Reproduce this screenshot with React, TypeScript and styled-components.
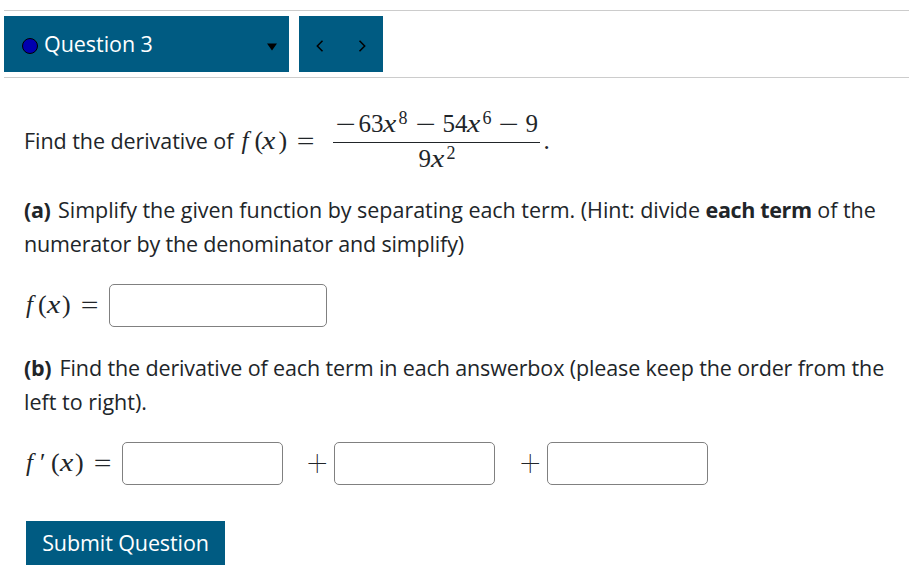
import React from 'react';
import styled, { createGlobalStyle } from 'styled-components';

const App = () => {
  return (
    <Page>
      <GlobalStyle />
      <Header>
        <QuestionSelect>
          <Status />
          <Title>Question 3</Title>
          <Caret viewBox="0 0 10 8">
            <path d="M0 0.5h10L5 7.5z" />
          </Caret>
        </QuestionSelect>
        <Pager>
          <Arrow viewBox="0 0 8 12">
            <path d="M6.5 0.7L1.3 6l5.2 5.3" />
          </Arrow>
          <Arrow viewBox="0 0 8 12">
            <path d="M1.5 0.7L6.7 6l-5.2 5.3" />
          </Arrow>
        </Pager>
      </Header>

      <Body>
        <Prompt>
          <Line $spacing={-0.06}>Find the derivative of</Line>
          <Math>
            <Func $w={15}>f</Func>
            <Paren $w={8}>(</Paren>
            <Variable $w={16}>x</Variable>
            <Paren $w={19}>)</Paren>
            <Operator $w={18}>=</Operator>
          </Math>
          <Fraction>
            <Numerator>
              <Operator $w={21}>−</Operator>
              <Num $w={25}>63</Num>
              <Variable $w={15}>x</Variable>
              <Power $w={19}>8</Power>
              <Operator $w={25}>−</Operator>
              <Num $w={25}>54</Num>
              <Variable $w={15}>x</Variable>
              <Power $w={18}>6</Power>
              <Operator $w={25}>−</Operator>
              <Num $w={12}>9</Num>
            </Numerator>
            <Denominator>
              <Num $w={13}>9</Num>
              <Variable $w={15}>x</Variable>
              <Power $w={9}>2</Power>
            </Denominator>
          </Fraction>
          <Period>.</Period>
        </Prompt>

        <Part $top={16}>
          <Line $spacing={-0.035}>
            <Label $gap={3}>(a)</Label> Simplify the given function by separating each term. (Hint: divide <b>each term</b> of the
          </Line>
          <Line $spacing={-0.16}>numerator by the denominator and simplify)</Line>
        </Part>

        <AnswerRow>
          <Math>
            <Func $w={14}>f</Func>
            <Paren $w={9}>(</Paren>
            <Variable $w={15}>x</Variable>
            <Paren $w={19}>)</Paren>
            <Operator $w={28}>=</Operator>
          </Math>
          <Answer $w={218} aria-label="f(x)" />
        </AnswerRow>

        <Part $top={24}>
          <Line $spacing={-0.125}>
            <Label $gap={4}>(b)</Label> Find the derivative of each term in each answerbox (please keep the order from the
          </Line>
          <Line $spacing={0}>left to right).</Line>
        </Part>

        <AnswerRow>
          <Math>
            <Func $w={16}>f</Func>
            <Prime $w={11}>′</Prime>
            <Paren $w={9}>(</Paren>
            <Variable $w={15}>x</Variable>
            <Paren $w={19}>)</Paren>
            <Operator $w={28}>=</Operator>
          </Math>
          <Answer $w={161} aria-label="first term" />
          <Plus $w={51}>+</Plus>
          <Answer $w={161} aria-label="second term" />
          <Plus $w={52}>+</Plus>
          <Answer $w={161} aria-label="third term" />
        </AnswerRow>

        <Submit>Submit Question</Submit>
      </Body>
    </Page>
  );
};

const GlobalStyle = createGlobalStyle`
  * {
    box-sizing: border-box;
  }

  body {
    margin: 0;
    background: #fff;
    color: #212529;
    font-family: 'Open Sans', 'Noto Sans', sans-serif;
    font-size: 21.5px;
    overflow: hidden;
  }

  b {
    letter-spacing: -0.35px;
  }
`;

const Page = styled.div`
  width: 909px;
  height: 580px;
  padding: 10px 0 0 4px;
`;

const Header = styled.div`
  display: flex;
  gap: 10px;
  height: 68px;
  padding: 5px 0;
  border-top: 1px solid #ccc;
  border-bottom: 1px solid #ccc;
`;

const QuestionSelect = styled.div`
  display: flex;
  align-items: center;
  width: 285px;
  height: 56px;
  padding: 0 12px 0 18px;
  background: #005b82;
  color: #fff;
`;

const Status = styled.span`
  width: 16px;
  height: 16px;
  margin-top: 3px;
  border: 1.5px solid #000;
  border-radius: 50%;
  background: #0000b0;
`;

const Title = styled.span`
  flex: 1;
  margin: 0 0 2px 6px;
  letter-spacing: -0.05px;
`;

const Caret = styled.svg`
  width: 10px;
  height: 8px;
  margin-top: 6px;
`;

const Pager = styled.div`
  display: flex;
  align-items: center;
  justify-content: space-between;
  width: 84px;
  height: 56px;
  padding: 4px 17px 0;
  background: #005b82;
`;

const Arrow = styled.svg`
  width: 8px;
  height: 12px;
  fill: none;
  stroke: #000;
  stroke-width: 1.5;
`;

const Body = styled.div`
  padding: 30px 0 0 20px;
`;

const Prompt = styled.div`
  display: flex;
  align-items: center;
  height: 69px;
`;

const Line = styled.div<{ $spacing: number }>`
  line-height: 34px;
  letter-spacing: ${({ $spacing }) => $spacing}px;
  white-space: nowrap;

  ${Prompt} & {
    margin-bottom: 3px;
  }
`;

const Label = styled.b<{ $gap: number }>`
  margin-right: ${({ $gap }) => $gap - 1}px;
`;

const Math = styled.div`
  display: flex;
  align-items: baseline;
  margin-bottom: 2px;
  line-height: 34px;
  font-family: 'Liberation Serif', serif;
  font-size: 25px;

  ${Prompt} & {
    margin: 0 0 3px 6px;
  }
`;

const Num = styled.span<{ $w: number }>`
  flex: none;
  width: ${({ $w }) => $w}px;
  white-space: nowrap;
`;

const Func = styled(Num)`
  font-style: italic;
  padding-left: 2px;
`;

const Variable = styled(Num)`
  font-style: italic;
  transform: scaleX(1.2);
  transform-origin: left;
`;

const Paren = styled(Num)`
  font-size: 26px;
`;

const Operator = styled(Num)`
  font-family: 'Inter', sans-serif;
  font-weight: 200;
  font-size: 28px;
  line-height: 1;
  transform: translateX(-4px) scaleX(1.4);
  transform-origin: left;
`;

const Power = styled(Num)`
  align-self: flex-start;
  margin-top: -6px;
  font-size: 18px;
`;

const Prime = styled(Num)`
  font-size: 25px;
`;

const Fraction = styled.div`
  width: 207px;
  margin: 0 3px 0 18px;
  font-family: 'Liberation Serif', serif;
  font-size: 25px;
`;

const Numerator = styled.div`
  display: flex;
  align-items: baseline;
  height: 36px;
  padding-left: 4px;
  line-height: 34px;
  border-bottom: 1px solid #212529;
`;

const Denominator = styled.div`
  display: flex;
  align-items: baseline;
  justify-content: center;
  height: 35px;
  line-height: 32px;
`;

const Period = styled.span`
  margin-bottom: 4px;
  font-family: 'Liberation Serif', serif;
  font-size: 25px;
`;

const Part = styled.div<{ $top: number }>`
  height: 68px;
  margin-top: ${({ $top }) => $top}px;
`;

const AnswerRow = styled.div`
  display: flex;
  align-items: center;
  height: 43px;
  margin-top: 23px;
`;

const Answer = styled.input<{ $w: number }>`
  width: ${({ $w }) => $w}px;
  height: 43px;
  padding: 0 8px;
  border: 1px solid #808080;
  border-radius: 5px;
  background: #fff;
  font: inherit;
`;

const Plus = styled.span<{ $w: number }>`
  width: ${({ $w }) => $w}px;
  margin-bottom: 4px;
  padding-right: 6px;
  text-align: right;
  font-family: 'Lato', sans-serif;
  font-weight: 200;
  font-size: 37px;
  line-height: 34px;
  -webkit-text-stroke: 0.4px #212529;
`;

const Submit = styled.button`
  width: 199px;
  height: 44px;
  margin: 36px 0 0 2px;
  padding: 0 0 2px;
  border: 0;
  background: #005b82;
  color: #fff;
  font: inherit;
  letter-spacing: -0.1px;
  white-space: nowrap;
  cursor: pointer;
`;

export default App;
